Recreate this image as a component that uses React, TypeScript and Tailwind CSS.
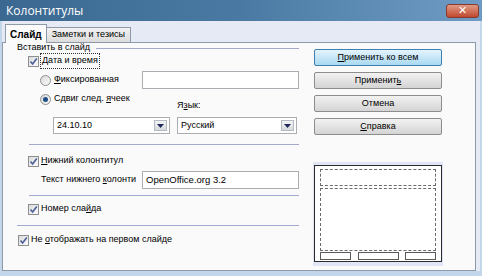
import React from 'react';

const font = { fontFamily: '"Liberation Sans", "DejaVu Sans", sans-serif' };

function Check() {
  return (
    <span className="relative w-[11px] h-[11px] shrink-0 border border-[#8e8f8f] bg-gradient-to-br from-[#dcdcdc] to-[#fbfbfb] flex items-center justify-center">
      <svg width="9" height="9" viewBox="0 0 9 9">
        <path d="M1.5 4.5 L3.6 7 L7.8 1.5" fill="none" stroke="#4a5f97" strokeWidth="1.6" />
      </svg>
    </span>
  );
}

function Radio({ on }: { on?: boolean }) {
  return (
    <span className="w-[11px] h-[11px] shrink-0 rounded-full border border-[#8e8f8f] bg-gradient-to-br from-[#d8d8d8] to-[#fafafa] flex items-center justify-center">
      {on && <span className="w-[5px] h-[5px] rounded-full bg-[#1f4f86]" />}
    </span>
  );
}

function Select({ value, w }: { value: string; w: string }) {
  return (
    <div className={`${w} h-[17px] bg-white border border-[#abadb3] flex items-center pl-[3px] pr-[2px]`}>
      <span className="flex-1 text-black">{value}</span>
      <span className="w-[13px] h-[11px] border border-[#b5b9c2] bg-gradient-to-b from-[#f4f4f4] to-[#d6d9de] flex items-center justify-center">
        <svg width="7" height="4" viewBox="0 0 7 4">
          <path d="M0 0 H7 L3.5 4 Z" fill="#1c2b5a" />
        </svg>
      </span>
    </div>
  );
}

function Sep({ ml }: { ml: string }) {
  return <div className={`${ml} h-px bg-[#a3aad0]`} />;
}

function Btn({ children, primary }: { children: React.ReactNode; primary?: boolean }) {
  return (
    <div
      className={`w-[128px] h-[17px] rounded-[2px] border flex items-center justify-center text-black ${
        primary
          ? 'border-[#3c7fb1] bg-gradient-to-b from-[#e5f4fc] to-[#a9d9f2]'
          : 'border-[#8d8d8d] bg-gradient-to-b from-[#f2f2f2] to-[#d4d4d4]'
      }`}
    >
      {children}
    </div>
  );
}

export default function App() {
  return (
    <div style={font} className="w-[482px] h-[276px] bg-[#c3d6ea] flex flex-col overflow-hidden">
      {/* title bar */}
      <div className="h-[21px] shrink-0 bg-gradient-to-r from-[#3a6890] via-[#4a7aa3] to-[#6f9cc4] flex items-center pl-[6px] pr-[3px]">
        <span className="flex-1 text-white text-[12px]" style={{ fontFamily: '"Open Sans", "DejaVu Sans", sans-serif' }}>
          Колонтитулы
        </span>
        <div className="w-[33px] h-[14px] rounded-[3px] border border-[#8a3a2c] bg-gradient-to-b from-[#e19a84] to-[#c0472f] flex items-center justify-center">
          <span className="text-white text-[11px] font-bold leading-none">✕</span>
        </div>
      </div>

      {/* client area */}
      <div className="flex-1 mx-[2px] mb-[5px] bg-[#e6eaf5] flex flex-col whitespace-nowrap">
        {/* tabs */}
        <div className="h-[21px] shrink-0 flex items-end pl-[3px]">
          <div className="h-[19px] px-[4px] bg-[#fbfbfb] border border-b-0 border-[#8e9aa9] flex items-center text-[10px] font-bold text-black relative top-[1px]">
            Слайд
          </div>
          <div className="h-[15px] px-[5px] border border-l-0 border-b-0 border-[#8e9aa9] bg-gradient-to-b from-[#f2f2f2] to-[#dcdcdc] flex items-center text-[9px] text-black">
            Заметки и тезисы
          </div>
        </div>

        {/* panel */}
        <div className="flex-1 mr-[4px] bg-[#fafafb] border border-[#8e9aa9] flex text-[9px] text-black">
          {/* left */}
          <div className="w-[296px] flex flex-col">
            <div className="h-[10px] flex items-center pl-[14px] gap-[2px]">
              <span>Вставить в слайд</span>
              <div className="flex-1 h-px bg-[#a3aad0] ml-[4px]" />
            </div>
            <div className="h-[12px] mt-[2px] flex items-center pl-[25px] gap-[2px]">
              <Check />
              <span className="outline-1 outline-dotted outline-[#333] px-[1px]">Дата и время</span>
            </div>
            <div className="h-[18px] mt-[4px] flex items-center pl-[37px]">
              <Radio />
              <span className="ml-[3px] w-[88px]">
                <u>Ф</u>иксированная
              </span>
              <div className="w-[157px] h-[18px] bg-white border border-[#abadb3]" />
            </div>
            <div className="h-[24px] mt-[4px] flex pl-[37px]">
              <div className="h-[12px] flex items-center w-[137px]">
                <Radio on />
                <span className="ml-[3px]">
                  Сдвиг след. <u>я</u>чеек
                </span>
              </div>
              <div className="self-end h-[18px] flex items-start">
                Я<u>з</u>ык:
              </div>
            </div>
            <div className="h-[17px] flex items-center pl-[50px] gap-[7px]">
              <Select value="24.10.10" w="w-[117px]" />
              <Select value="Русский" w="w-[120px]" />
            </div>
            <div className="mt-[10px]">
              <Sep ml="ml-[26px]" />
            </div>
            <div className="h-[12px] mt-[10px] flex items-center pl-[25px] gap-[2px]">
              <Check />
              <span>
                <u>Н</u>ижний колонтитул
              </span>
            </div>
            <div className="h-[18px] mt-[4px] flex items-center pl-[38px]">
              <span className="w-[101px]">
                Текст нижнего <u>к</u>олонти
              </span>
              <div className="w-[157px] h-[18px] bg-white border border-[#abadb3] flex items-center pl-[3px] text-[9.5px]">
                OpenOffice.org 3.2
              </div>
            </div>
            <div className="mt-[6px]">
              <Sep ml="ml-[26px]" />
            </div>
            <div className="h-[12px] mt-[7px] flex items-center pl-[25px] gap-[2px]">
              <Check />
              <span>
                Номер сла<u>й</u>да
              </span>
            </div>
            <div className="mt-[10px]">
              <Sep ml="ml-[14px]" />
            </div>
            <div className="h-[12px] mt-[8px] flex items-center pl-[15px] gap-[2px]">
              <Check />
              <span>
                Не <u>о</u>тображать на первом слайде
              </span>
            </div>
          </div>

          {/* right */}
          <div className="flex-1 flex flex-col pl-[15px] pt-[6px]">
            <div className="flex flex-col gap-[6px]">
              <Btn primary>
                <span>
                  <u>П</u>рименить ко всем
                </span>
              </Btn>
              <Btn>
                <span>
                  Применит<u>ь</u>
                </span>
              </Btn>
              <Btn>Отмена</Btn>
              <Btn>
                <span>
                  <u>С</u>правка
                </span>
              </Btn>
            </div>
            <div className="mt-[27px] w-[130px] h-[104px] bg-[#e2e5f5] px-[1px] pt-[3px] pb-[4px] -ml-[1px]">
              <div className="h-full bg-white border border-[#2a2a2a] flex flex-col px-[5px] pt-[3px] pb-[1px]">
                <div className="h-[17px] border border-dashed border-[#6b6b6b]" />
                <div className="flex-1 mt-[2px] border border-dashed border-[#6b6b6b]" />
                <div className="h-[8px] mt-[1px] flex justify-between">
                  <div className="w-[31px] border border-[#5a5a5a]" />
                  <div className="w-[41px] border border-[#5a5a5a]" />
                  <div className="w-[31px] border border-[#5a5a5a]" />
                </div>
              </div>
            </div>
          </div>
        </div>
      </div>
    </div>
  );
}
